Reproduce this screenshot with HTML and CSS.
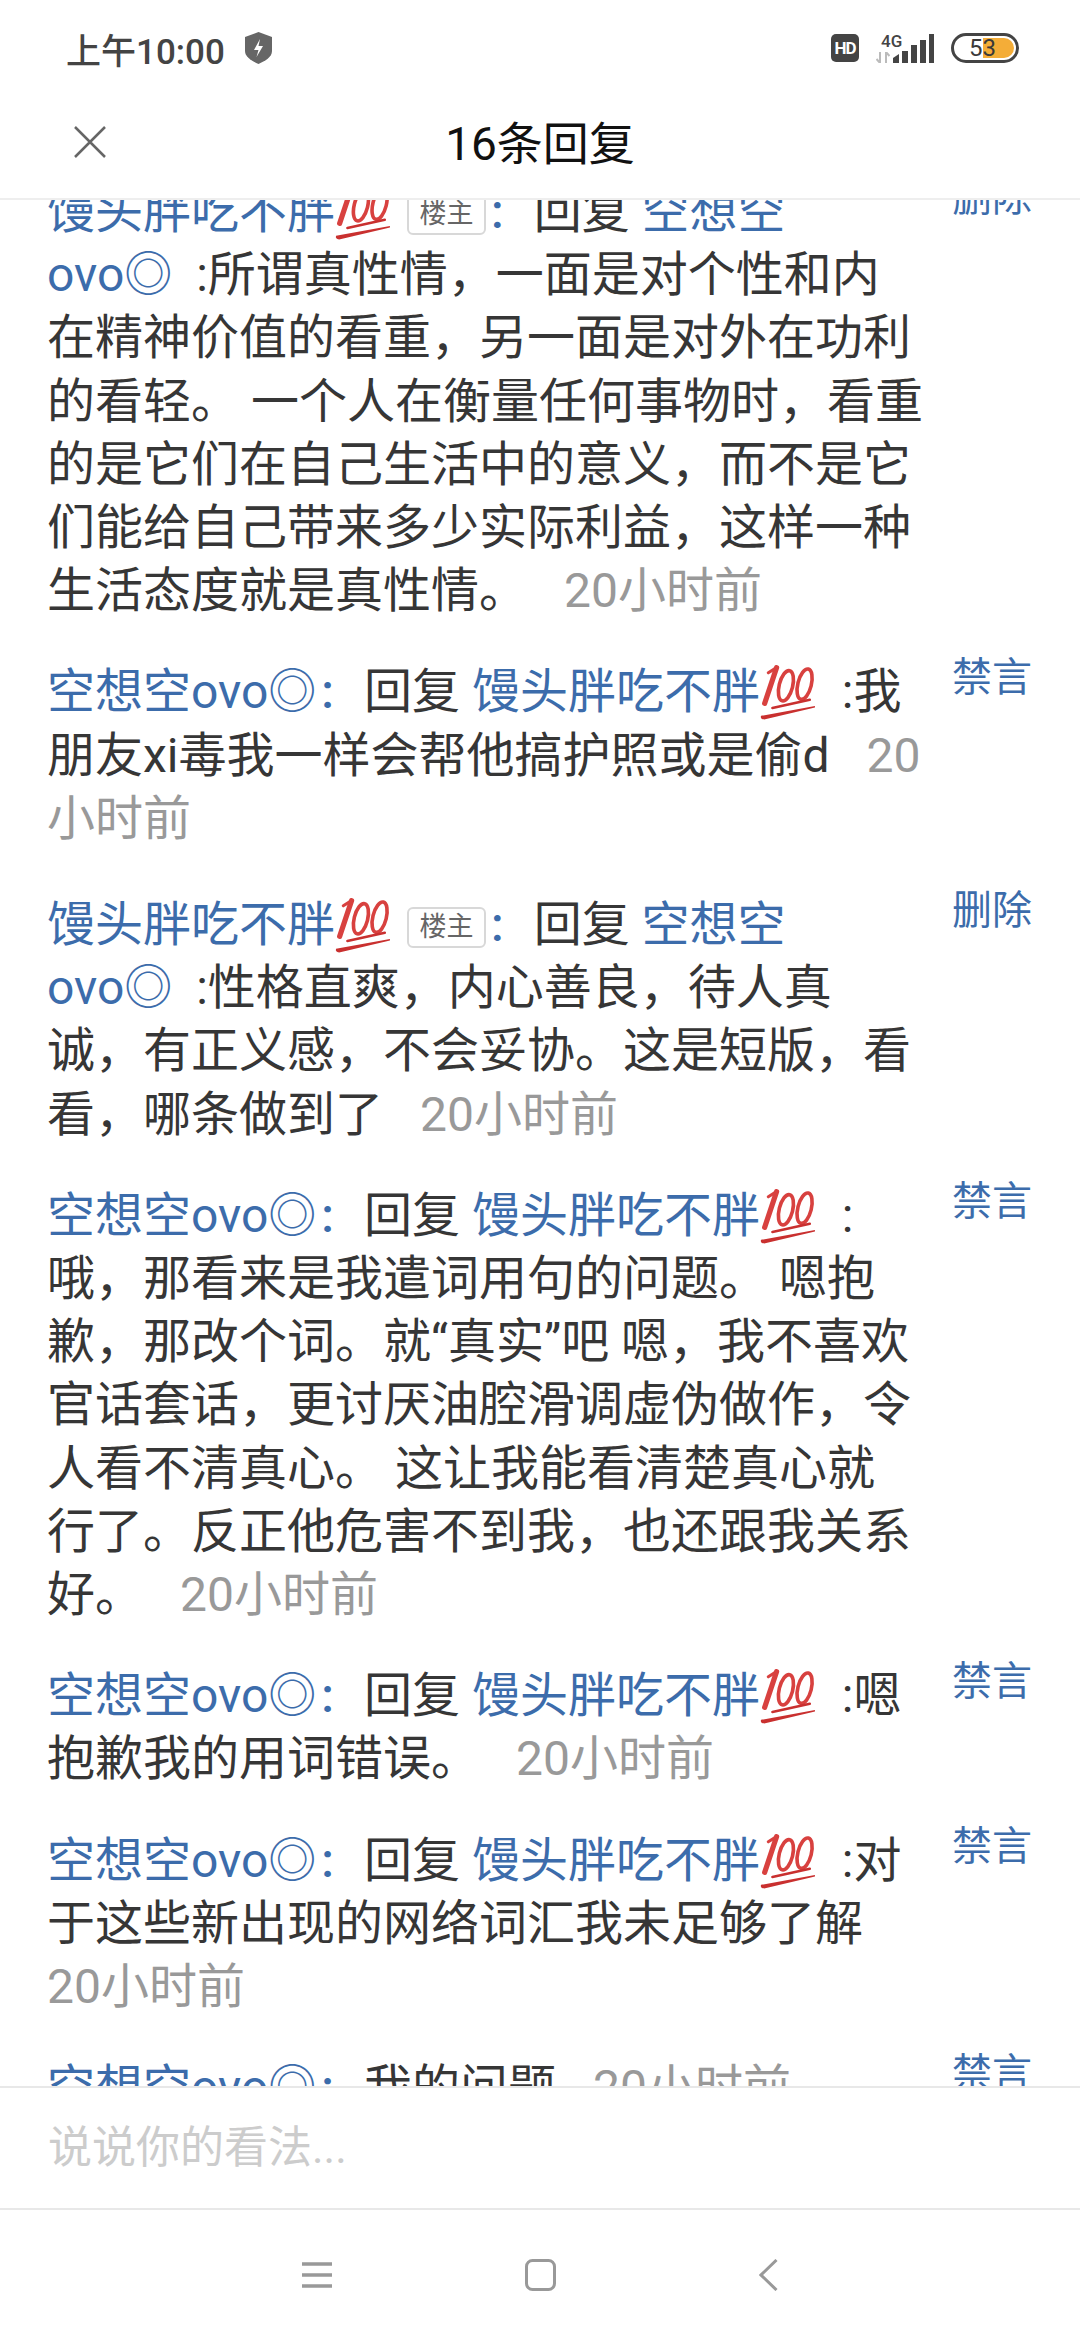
FILE: index.html
```html
<!DOCTYPE html>
<html lang="zh-CN">
<head>
    <meta charset="UTF-8">
    <meta name="viewport" content="width=device-width, initial-scale=1.0">
    <title>16条回复</title>
    <link rel="stylesheet" href="styles.css">
</head>
<body>
    <svg class="defs" width="0" height="0">
        <symbol id="hundred" viewBox="0 0 54 53">
            <g fill="none" stroke="#d8413f" stroke-linecap="round">
                <path d="M16 2.5 L4.5 37" stroke-width="5"/>
                <path d="M16 2.5 L8 7.5" stroke-width="3"/>
                <ellipse cx="25" cy="20" rx="6.5" ry="15" transform="rotate(14 25 20)" stroke-width="3.5"/>
                <ellipse cx="43" cy="18.5" rx="6.5" ry="15" transform="rotate(14 43 18.5)" stroke-width="3.5"/>
            </g>
            <path d="M1 49 L53 39.5 L53 41 L4 52.5 Q0 52 1 49 Z" fill="#c9302f"/>
            <path d="M12 41.5 L48 33.5" stroke="#c9302f" stroke-width="2.5" stroke-linecap="round"/>
        </symbol>
    </svg>

    <div class="status-bar">
        <div class="status-left">
            <span class="clock">上午10:00</span>
            <svg class="shield" viewBox="0 0 27 32"><path d="M13.5 0 L27 5 V19 C27 25 20 29 13.5 32 C7 29 0 25 0 19 V5 Z" fill="#666"/><path d="M15 7 L9 18 H13.5 L11.5 25 L18 14 H13.5 Z" fill="#fff"/></svg>
        </div>
        <div class="status-right">
            <span class="hd">HD</span>
            <div class="net">
                <span class="net-type">4G</span>
                <svg class="arrows" viewBox="0 0 14 11"><path d="M4 0 V11 L0.5 7 M10 11 V0 L13.5 4" fill="none" stroke="#bbb" stroke-width="2"/></svg>
            </div>
            <svg class="signal" viewBox="0 0 41 29"><path d="M0 29 V24 L6 20 V29 Z M9 29 V17 H15 V29 Z M18 29 V11 H24 V29 Z M27 29 V6 H33 V29 Z M36 29 V0 H41 V29 Z" fill="#444"/></svg>
            <div class="battery">
                <div class="battery-fill"></div>
                <span class="battery-num">53</span>
            </div>
        </div>
    </div>

    <div class="header">
        <svg class="close" viewBox="0 0 32 32"><path d="M1 1 L31 31 M31 1 L1 31" stroke="#666" stroke-width="2.5" fill="none"/></svg>
        <h1 class="title">16条回复</h1>
    </div>

    <div class="list">
        <div class="row row-scrolled">
            <p class="text"><span class="name">馒头胖吃不胖<svg class="emoji"><use href="#hundred"/></svg></span><span class="tag">楼主</span><span class="name colon">:</span>回复 <span class="name">空想空<br>ovo◎</span> <span class="sep">:</span>所谓真性情，一面是对个性和内<br>在精神价值的看重，另一面是对外在功利<br>的看轻。 一个人在衡量任何事物时，看重<br>的是它们在自己生活中的意义，而不是它<br>们能给自己带来多少实际利益，这样一种<br>生活态度就是真性情。<span class="time">20小时前</span></p>
            <a class="action">删除</a>
        </div>
        <div class="row">
            <p class="text"><span class="name">空想空ovo◎</span><span class="name colon">:</span>回复 <span class="name">馒头胖吃不胖<svg class="emoji"><use href="#hundred"/></svg></span> <span class="sep">:</span>我<br>朋友xi毒我一样会帮他搞护照或是偷d<span class="time">20<br>小时前</span></p>
            <a class="action">禁言</a>
        </div>
        <div class="row row-tagged">
            <p class="text"><span class="name">馒头胖吃不胖<svg class="emoji"><use href="#hundred"/></svg></span><span class="tag">楼主</span><span class="name colon">:</span>回复 <span class="name">空想空<br>ovo◎</span> <span class="sep">:</span>性格直爽，内心善良，待人真<br>诚，有正义感，不会妥协。这是短版，看<br>看，哪条做到了<span class="time">20小时前</span></p>
            <a class="action">删除</a>
        </div>
        <div class="row">
            <p class="text"><span class="name">空想空ovo◎</span><span class="name colon">:</span>回复 <span class="name">馒头胖吃不胖<svg class="emoji"><use href="#hundred"/></svg></span> <span class="sep">:</span><br>哦，那看来是我遣词用句的问题。 嗯抱<br>歉，那改个词。就“真实”吧 嗯，我不喜欢<br>官话套话，更讨厌油腔滑调虚伪做作，令<br>人看不清真心。 这让我能看清楚真心就<br>行了。反正他危害不到我，也还跟我关系<br>好。<span class="time">20小时前</span></p>
            <a class="action">禁言</a>
        </div>
        <div class="row">
            <p class="text"><span class="name">空想空ovo◎</span><span class="name colon">:</span>回复 <span class="name">馒头胖吃不胖<svg class="emoji"><use href="#hundred"/></svg></span> <span class="sep">:</span>嗯<br>抱歉我的用词错误。<span class="time">20小时前</span></p>
            <a class="action">禁言</a>
        </div>
        <div class="row">
            <p class="text"><span class="name">空想空ovo◎</span><span class="name colon">:</span>回复 <span class="name">馒头胖吃不胖<svg class="emoji"><use href="#hundred"/></svg></span> <span class="sep">:</span>对<br>于这些新出现的网络词汇我未足够了解<br><span class="time first">20小时前</span></p>
            <a class="action">禁言</a>
        </div>
        <div class="row">
            <p class="text"><span class="name">空想空ovo◎</span><span class="name colon">:</span>我的问题<span class="time">20小时前</span></p>
            <a class="action">禁言</a>
        </div>
    </div>

    <div class="reply-bar">说说你的看法...</div>

    <div class="nav-bar">
        <svg class="nav-menu" viewBox="0 0 30 26"><path d="M0 2 H30 M0 13 H30 M0 24 H30" stroke="#999" stroke-width="3.5" fill="none"/></svg>
        <svg class="nav-home" viewBox="0 0 31 32"><rect x="1.5" y="1.5" width="28" height="29" rx="6" stroke="#999" stroke-width="3" fill="none"/></svg>
        <svg class="nav-back" viewBox="0 0 19 32"><path d="M17.5 1 L2 16 L17.5 31" stroke="#999" stroke-width="3" fill="none"/></svg>
    </div>
</body>
</html>
```

FILE: styles.css
```css
body {
    margin: 0;
    width: 1080px;
    height: 2340px;
    display: flex;
    flex-direction: column;
    overflow: hidden;
    background: #fff;
    font-family: Roboto, "Noto Sans CJK SC", sans-serif;
    color: #363636;
}
.defs {
    position: absolute;
}
.status-bar {
    height: 100px;
    flex: none;
    box-sizing: border-box;
    padding: 0 61px 4px 66px;
    display: flex;
    justify-content: space-between;
    align-items: center;
}
.status-left {
    display: flex;
    align-items: center;
    gap: 20px;
}
.clock {
    font-size: 35px;
    font-weight: 500;
    color: #444;
}
.shield {
    width: 27px;
    height: 32px;
}
.status-right {
    display: flex;
    align-items: center;
}
.hd {
    width: 28px;
    height: 28px;
    border-radius: 5px;
    background: #444;
    color: #fff;
    font-size: 17px;
    font-weight: 700;
    line-height: 28px;
    text-align: center;
    letter-spacing: -1px;
}
.net {
    width: 17px;
    height: 29px;
    margin-left: 17px;
    display: flex;
    flex-direction: column;
    align-items: flex-start;
}
.net-type {
    margin-left: 5px;
    font-size: 17px;
    font-weight: 500;
    line-height: 15px;
    color: #444;
    white-space: nowrap;
}
.arrows {
    width: 14px;
    height: 11px;
    margin-top: 3px;
}
.signal {
    width: 41px;
    height: 29px;
}
.battery {
    position: relative;
    width: 68px;
    height: 30px;
    margin-left: 17px;
    box-sizing: border-box;
    border: 3px solid #444;
    border-radius: 15px;
}
.battery-fill {
    position: absolute;
    left: 29px;
    top: 2px;
    bottom: 2px;
    right: 2px;
    background: #f4ad38;
    border-radius: 0 11px 11px 0;
}
.battery-num {
    position: absolute;
    left: 15px;
    top: 0;
    font-size: 24px;
    line-height: 24px;
    color: #3a3a3a;
}
.header {
    height: 100px;
    flex: none;
    box-sizing: border-box;
    border-bottom: 2px solid #eee;
    display: flex;
    align-items: center;
    justify-content: center;
    position: relative;
}
.close {
    position: absolute;
    left: 74px;
    top: 26px;
    width: 32px;
    height: 32px;
}
.title {
    margin: 0 0 18px;
    font-size: 46px;
    font-weight: 400;
    color: #111;
}
.list {
    flex: 1;
    overflow: hidden;
    padding: 0 48px;
}
.row {
    display: flex;
    justify-content: space-between;
    margin-bottom: 38px;
}
.row-scrolled {
    margin-top: -20px;
}
.row-tagged {
    margin-top: 43px;
}
.text {
    margin: 0 0 0 -1px;
    font-size: 48px;
    line-height: 63.2px;
    white-space: nowrap;
}
.name {
    color: #3c6cab;
}
.emoji {
    width: 56px;
    height: 55px;
    margin-right: 2px;
    vertical-align: -12px;
}
.tag {
    display: inline-block;
    box-sizing: border-box;
    width: 79px;
    height: 41px;
    margin-left: 14px;
    border: 2px solid #d8d8d8;
    border-radius: 6px;
    font-size: 27px;
    line-height: 36px;
    text-align: center;
    color: #666;
    vertical-align: 5px;
}
.colon {
    font-weight: 500;
    margin: 0 30px 0 5px;
}
.sep {
    margin-left: 12px;
}
.time {
    margin-left: 37px;
    color: #999;
}
.time.first {
    margin-left: 0;
}
.action {
    font-size: 40px;
    line-height: 40px;
    color: #3c6cab;
    margin: -2px 0 0;
}
.reply-bar {
    height: 124px;
    flex: none;
    box-sizing: border-box;
    border-top: 2px solid #e8e8e8;
    border-bottom: 2px solid #e8e8e8;
    padding: 0 48px;
    font-size: 44px;
    line-height: 120px;
    color: #ccc;
    background: #fff;
}
.nav-bar {
    height: 130px;
    flex: none;
    position: relative;
}
.nav-menu {
    position: absolute;
    left: 302px;
    top: 52px;
    width: 30px;
    height: 26px;
}
.nav-home {
    position: absolute;
    left: 525px;
    top: 49px;
    width: 31px;
    height: 32px;
}
.nav-back {
    position: absolute;
    left: 759px;
    top: 49px;
    width: 19px;
    height: 32px;
}
```
